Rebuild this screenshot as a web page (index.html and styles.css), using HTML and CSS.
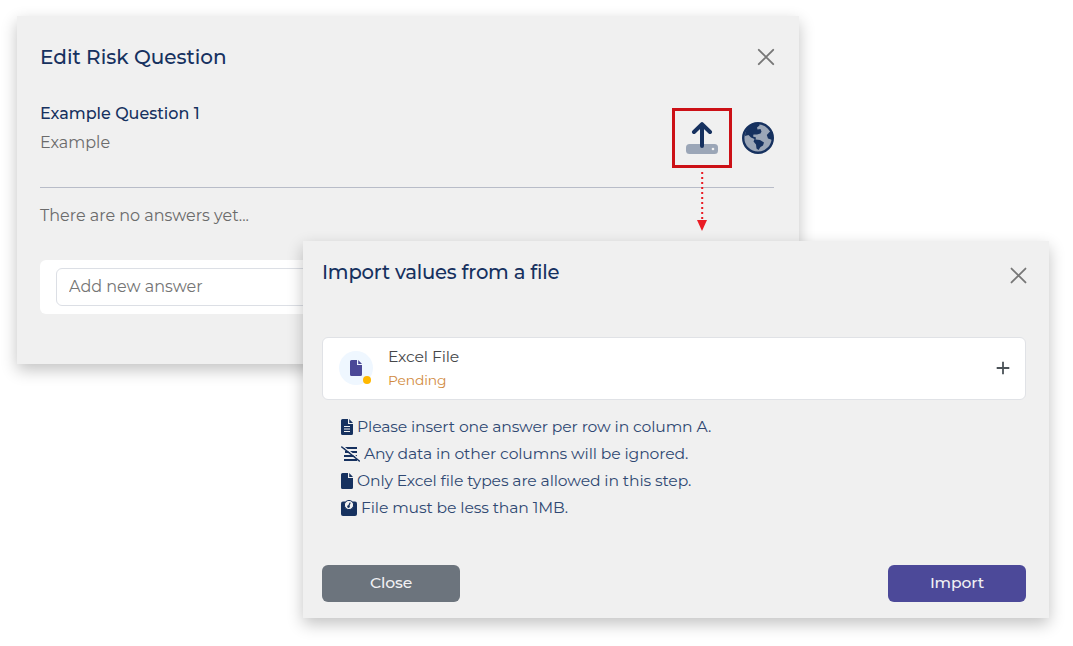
FILE: index.html
```html
<!DOCTYPE html>
<html lang="en">

<head>
    <meta charset="UTF-8">
    <title>Edit Risk Question</title>
    <link rel="stylesheet" href="styles.css">
</head>

<body>
    <div class="modal edit-modal">
        <div class="modal-header">
            <h2>Edit Risk Question</h2>
            <svg class="close" viewBox="0 0 18 18"><path d="M1.8 1.8L16.2 16.2M16.2 1.8L1.8 16.2"/></svg>
        </div>
        <div class="question">
            <div>
                <h3>Example Question 1</h3>
                <p class="example">Example</p>
            </div>
            <div class="actions">
                <div class="upload">
                    <svg width="32" height="32" viewBox="0 0 32 32">
                        <rect x="0" y="22" width="32" height="10" rx="3.5" fill="#9ba6b7"/>
                        <circle cx="27" cy="27" r="1.3" fill="#f0f0f0"/>
                        <path d="M16 24V2.5M8 10L16 2.2L24 10" fill="none" stroke="#16315f" stroke-width="4" stroke-linecap="round" stroke-linejoin="round"/>
                    </svg>
                    <svg class="arrow" width="12" height="62" viewBox="0 0 12 62">
                        <path d="M6.2 1V50" stroke="#ea1c24" stroke-width="2" stroke-dasharray="2 3"/>
                        <path d="M1 49H11L6 60Z" fill="#ea1c24"/>
                    </svg>
                </div>
                <svg width="32" height="32" viewBox="0 0 32 32">
                    <circle cx="16" cy="16" r="14.8" fill="#9ba6b7" stroke="#16315f" stroke-width="2.4"/>
                    <path d="M3 14C3 7 9 1.5 17 1.5L17.5 3.5L15 5.5L15.5 7.5L18.5 7L19.5 9.5L18.5 11.5L15 12.5L11.5 12.5L11 14.5L14 15.5L13.5 17.5L18 18L22 20.5L21 23.5L18.5 25L16.5 28L14.5 26.5L14 22.5L11.5 19.5L12.5 17L9 15.5L6.5 13Z" fill="#16315f"/>
                    <path d="M30 10L27.5 10L24.8 13L26 16.5L30.5 18Z" fill="#16315f"/>
                </svg>
            </div>
        </div>
        <p class="empty">There are no answers yet...</p>
        <div class="new-answer">
            <input type="text" placeholder="Add new answer">
        </div>
    </div>

    <div class="modal import-modal">
        <div class="modal-header">
            <h2>Import values from a file</h2>
            <svg class="close" viewBox="0 0 18 18"><path d="M1.6 1.6L16.4 16.4M16.4 1.6L1.6 16.4"/></svg>
        </div>
        <div class="file-card">
            <div class="file-icon">
                <svg width="12" height="16" viewBox="0 0 12 16">
                    <path d="M1.5 0H7V5H12V14.5Q12 16 10.5 16H1.5Q0 16 0 14.5V1.5Q0 0 1.5 0ZM8.2 0L12 3.9H8.2Z" fill="#4b4897"/>
                </svg>
                <span class="status-dot"></span>
            </div>
            <div class="file-info">
                <p class="file-name">Excel File</p>
                <p class="file-status">Pending</p>
            </div>
            <svg class="plus" width="14" height="14" viewBox="0 0 14 14"><path d="M7 .7V13.3M.7 7H13.3"/></svg>
        </div>
        <ul class="rules">
            <li>
                <svg width="12" height="16" viewBox="0 0 12 16">
                    <path d="M1.5 0H7V5H12V14.5Q12 16 10.5 16H1.5Q0 16 0 14.5V1.5Q0 0 1.5 0ZM8.2 0L12 3.9H8.2Z"/>
                    <path d="M3 7.5H9M3 10H9M3 12.5H9" stroke="#f0f0f0" stroke-width="1.1"/>
                </svg>
                <span>Please insert one answer per row in column A.</span>
            </li>
            <li>
                <svg width="19" height="16" viewBox="0 0 19 16">
                    <path d="M3 2H16M4 6H16M3 10H16M3 14H16" stroke="#16315f" stroke-width="1.9"/>
                    <path d="M1.8 .2L19 13.6" stroke="#f0f0f0" stroke-width="1.4"/>
                    <path d="M.8 1L18.3 15" stroke="#16315f" stroke-width="1.6" stroke-linecap="round"/>
                </svg>
                <span>Any data in other columns will be ignored.</span>
            </li>
            <li>
                <svg width="12" height="16" viewBox="0 0 12 16">
                    <path d="M1.5 0H7V5H12V14.5Q12 16 10.5 16H1.5Q0 16 0 14.5V1.5Q0 0 1.5 0ZM8.2 0L12 3.9H8.2Z"/>
                </svg>
                <span>Only Excel file types are allowed in this step.</span>
            </li>
            <li>
                <svg width="16" height="16" viewBox="0 0 16 16">
                    <rect y="1.5" width="16" height="14.5" rx="2"/>
                    <circle cx="8" cy="5" r="4.6" fill="#f0f0f0" stroke="#16315f" stroke-width="1"/>
                    <path d="M7.5 6.5L9 3" stroke="#16315f" stroke-width="1.2" stroke-linecap="round"/>
                    <circle cx="7.5" cy="6.6" r="1.3"/>
                </svg>
                <span>File must be less than 1MB.</span>
            </li>
        </ul>
        <div class="modal-footer">
            <button class="btn btn-close">Close</button>
            <button class="btn btn-import">Import</button>
        </div>
    </div>
</body>

</html>
```

FILE: styles.css
```css
* {
    margin: 0;
    padding: 0;
    box-sizing: border-box;
}

body {
    position: relative;
    height: 646px;
    overflow: hidden;
    padding: 16px 17px;
    background-color: #fff;
    font-family: Montserrat, Inter, "Liberation Sans", sans-serif;
    font-size: 16px;
    color: #6b6b6b;
}

svg {
    display: block;
    flex-shrink: 0;
}

.modal {
    background-color: #f0f0f0;
    box-shadow: 0 6px 15px rgba(0, 0, 0, 0.24);
}

.modal-header {
    display: flex;
    justify-content: space-between;
}

.modal h2 {
    font-size: 20px;
    font-weight: 500;
    line-height: 26px;
    color: #16315f;
}

.close {
    width: 18px;
    height: 18px;
    fill: none;
    stroke: #777;
    stroke-width: 1.9;
    stroke-linecap: round;
}

.edit-modal {
    width: 782px;
    height: 348px;
    padding: 28px 25px 0 23px;
}

.edit-modal .modal-header {
    height: 48px;
}

.edit-modal .close {
    margin: 4px -1px 0 0;
}

.question {
    display: flex;
    justify-content: space-between;
    height: 96px;
    border-bottom: 1px solid #b8bcc8;
}

.question h3 {
    margin-top: 10px;
    font-size: 16px;
    font-weight: 500;
    line-height: 24px;
    color: #16315f;
}

.example {
    margin-top: 5px;
    line-height: 24px;
}

.actions {
    display: flex;
    align-items: center;
    gap: 10px;
    height: 60px;
    margin-top: 16px;
}

.upload {
    position: relative;
    width: 60px;
    height: 60px;
    padding: 11px;
    border: 3px solid #cc1016;
}

.arrow {
    position: absolute;
    left: 21px;
    top: 60px;
}

.empty {
    margin-top: 16px;
    line-height: 24px;
}

.new-answer {
    height: 54px;
    margin-top: 32px;
    padding: 8px 16px;
    border-radius: 6px;
    background-color: #fff;
}

.new-answer input {
    width: 100%;
    height: 38px;
    padding: 0 12px 2px;
    border: 1px solid #dcdfe5;
    border-radius: 6px;
    font: inherit;
}

.new-answer input::placeholder {
    color: #757575;
}

/* second dialog sits on top of the first */
.import-modal {
    position: absolute;
    left: 303px;
    top: 241px;
    width: 746px;
    height: 377px;
    padding: 18px 23px 0 19px;
    font-size: 15.6px;
    letter-spacing: -0.12px;
}

.import-modal .modal-header {
    height: 78px;
}

.import-modal h2 {
    font-size: 19.6px;
    letter-spacing: -0.2px;
}

.import-modal .close {
    width: 17px;
    height: 17px;
    margin: 8px -1px 0 0;
}

.file-card {
    display: flex;
    align-items: center;
    height: 63px;
    padding: 0 15px 1px 16px;
    border: 1px solid #e0e2e6;
    border-radius: 6px;
    background-color: #fff;
}

.file-icon {
    position: relative;
    display: flex;
    align-items: center;
    justify-content: center;
    width: 34px;
    height: 34px;
    padding-right: 1px;
    border-radius: 50%;
    background-color: #eff7ff;
}

.status-dot {
    position: absolute;
    right: 2px;
    bottom: 1px;
    width: 8px;
    height: 8px;
    border-radius: 50%;
    background-color: #ffb800;
}

.file-info {
    flex: 1;
    margin-left: 15px;
}

.file-name {
    line-height: 24px;
    color: #454749;
}

.file-status {
    font-size: 13.8px;
    line-height: 22px;
    color: #d18a3c;
}

.plus {
    fill: none;
    stroke: #4b5257;
    stroke-width: 1.8;
}

.rules {
    margin: 13px 0 0 19px;
    list-style: none;
}

.rules li {
    display: flex;
    align-items: center;
    gap: 4px;
    height: 27px;
    color: #2f4872;
    white-space: nowrap;
}

.rules svg {
    fill: #16315f;
}

.modal-footer {
    display: flex;
    justify-content: space-between;
    margin-top: 44px;
}

.btn {
    width: 138px;
    height: 37px;
    padding-bottom: 2px;
    border: 0;
    border-radius: 6px;
    font: inherit;
    font-weight: 500;
    letter-spacing: -0.12px;
    color: #f1f1f4;
}

.btn-close {
    background-color: #6c747d;
}

.btn-import {
    background-color: #4c4999;
}
```
